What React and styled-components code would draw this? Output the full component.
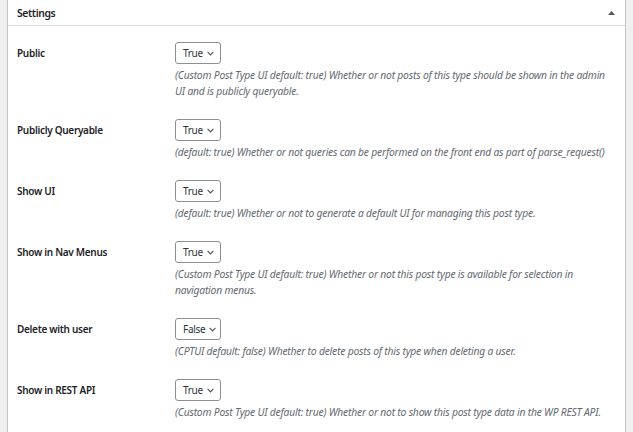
import styled, { createGlobalStyle } from 'styled-components';

const GlobalStyle = createGlobalStyle`
  html, body {
    margin: 0;
    padding: 0;
    background: #f0f0f1;
  }
  body {
    font-family: "Noto Sans", "Open Sans", sans-serif;
    color: #1d2327;
  }
`;

const Page = styled.div`
  height: 432px;
  padding-left: 7px;
  overflow: hidden;
`;

const Panel = styled.section`
  width: 617px;
  height: 100%;
  background: #fff;
  border-left: 1px solid #c3c4c7;
  border-right: 1px solid #c3c4c7;
`;

const Header = styled.header`
  display: flex;
  align-items: center;
  justify-content: space-between;
  height: 25px;
  padding: 0 10px 0 9px;
  border-bottom: 1px solid #dcdcde;
  font-size: 10.4px;
  font-weight: 600;
  letter-spacing: -0.4px;
`;

const Toggle = styled.svg`
  width: 7px;
  height: 4px;
  fill: #50575e;
`;

const Rows = styled.div`
  padding: 5px 10px 0 9px;
`;

const Row = styled.div`
  display: grid;
  grid-template-columns: 158px 1fr;
  padding: 11px 0 9px;
`;

const Label = styled.div`
  font-size: 10px;
  font-weight: 600;
  line-height: 22px;
  letter-spacing: -0.3px;
`;

const Field = styled.div`
  display: flex;
  flex-direction: column;
  align-items: flex-start;
`;

const SelectBox = styled.div`
  display: flex;
  align-items: center;
  justify-content: space-between;
  gap: 4px;
  box-sizing: border-box;
  width: 46px;
  height: 22px;
  padding: 0 6px 0 7px;
  border: 1px solid #8c8f94;
  border-radius: 3px;
  font-size: 10px;
  letter-spacing: -0.3px;
  color: #2c3338;
  background: #fff;
`;

const Chevron = styled.svg`
  flex: none;
  width: 7px;
  height: 5px;
  fill: none;
  stroke: #50575e;
  stroke-width: 1.2;
`;

const Description = styled.p`
  margin: 3px 0 0;
  font-size: 10.3px;
  font-style: italic;
  line-height: 16px;
  letter-spacing: -0.2px;
  color: #646970;
`;

const settings = [
  {
    label: 'Public',
    value: 'True',
    text: '(Custom Post Type UI default: true) Whether or not posts of this type should be shown in the admin UI and is publicly queryable.',
  },
  {
    label: 'Publicly Queryable',
    value: 'True',
    text: '(default: true) Whether or not queries can be performed on the front end as part of parse_request()',
  },
  {
    label: 'Show UI',
    value: 'True',
    text: '(default: true) Whether or not to generate a default UI for managing this post type.',
  },
  {
    label: 'Show in Nav Menus',
    value: 'True',
    text: '(Custom Post Type UI default: true) Whether or not this post type is available for selection in navigation menus.',
  },
  {
    label: 'Delete with user',
    value: 'False',
    text: '(CPTUI default: false) Whether to delete posts of this type when deleting a user.',
  },
  {
    label: 'Show in REST API',
    value: 'True',
    text: '(Custom Post Type UI default: true) Whether or not to show this post type data in the WP REST API.',
  },
];

function Select({ value }) {
  return (
    <SelectBox>
      {value}
      <Chevron viewBox="0 0 7 5">
        <path d="M0.6 0.9 L3.5 3.8 L6.4 0.9" />
      </Chevron>
    </SelectBox>
  );
}

export default function App() {
  return (
    <>
      <GlobalStyle />
      <Page>
        <Panel>
          <Header>
            Settings
            <Toggle viewBox="0 0 7 4">
              <path d="M0 4 L3.5 0 L7 4 Z" />
            </Toggle>
          </Header>
          <Rows>
            {settings.map((s) => (
              <Row key={s.label}>
                <Label>{s.label}</Label>
                <Field>
                  <Select value={s.value} />
                  <Description>{s.text}</Description>
                </Field>
              </Row>
            ))}
          </Rows>
        </Panel>
      </Page>
    </>
  );
}
